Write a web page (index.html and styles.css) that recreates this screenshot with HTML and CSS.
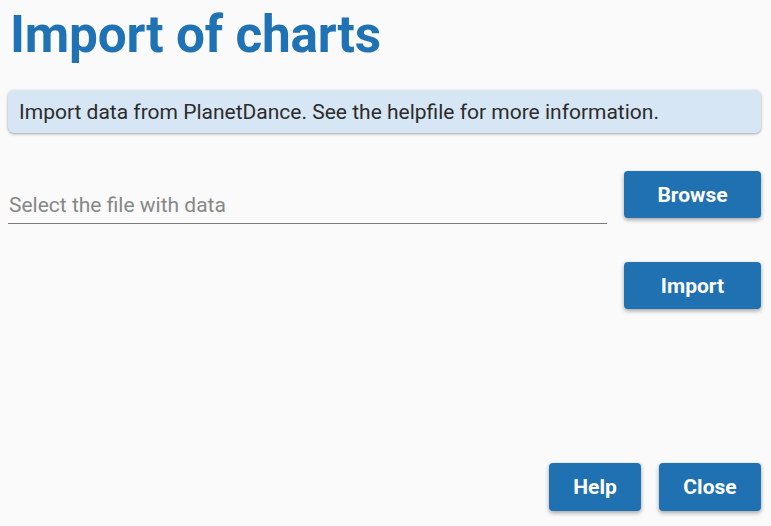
FILE: index.html
```html
<!DOCTYPE html>
<html lang="en">
<head>
<meta charset="utf-8">
<title>Import of charts</title>
<link rel="stylesheet" href="styles.css">
</head>
<body>
<div class="page">
  <h1 class="title">Import of charts</h1>
  <div class="info">Import data from PlanetDance. See the helpfile for more information.</div>
  <div class="file-row">
    <div class="field"><span class="placeholder">Select the file with data</span></div>
    <button class="btn btn-wide">Browse</button>
  </div>
  <div class="import-row">
    <button class="btn btn-wide">Import</button>
  </div>
  <div class="spacer"></div>
  <div class="footer">
    <button class="btn btn-help">Help</button>
    <button class="btn btn-close">Close</button>
  </div>
</div>
</body>
</html>
```

FILE: styles.css
```css
html, body {
  margin: 0;
  padding: 0;
  background: #fafafa;
  height: 100%;
}
body {
  font-family: Roboto, "Liberation Sans", sans-serif;
}
.page {
  box-sizing: border-box;
  height: 526px;
  padding: 0 10px 15px 8px;
  display: flex;
  flex-direction: column;
}
.title {
  margin: 0;
  padding: 4px 0 0 2px;
  font-size: 51.3px;
  font-weight: 700;
  line-height: 62px;
  color: #1f72b4;
  letter-spacing: -0.2px;
}
.info {
  margin-top: 24px;
  height: 43px;
  box-sizing: border-box;
  background: #d6e6f4;
  border-radius: 6px;
  box-shadow: 0 1px 3px rgba(0,0,0,0.35);
  padding: 0 11px;
  display: flex;
  align-items: center;
  font-size: 21px;
  color: #2c2c2c;
}
.file-row {
  margin-top: 38px;
  display: flex;
  align-items: flex-start;
  justify-content: space-between;
}
.field {
  width: 599px;
  margin-top: 21px;
  height: 32px;
  border-bottom: 1.5px solid #7a7a7a;
  display: flex;
  align-items: flex-end;
  padding-left: 1px;
  box-sizing: border-box;
}
.placeholder {
  font-size: 21px;
  color: #888;
  padding-bottom: 6px;
}
.btn {
  border: none;
  border-radius: 4px;
  background: #1f71b2;
  color: #fff;
  font-family: Roboto, "Liberation Sans", sans-serif;
  font-size: 21px;
  font-weight: 700;
  height: 47px;
  box-shadow: 0 2px 4px rgba(0,0,0,0.35);
  padding: 0;
  margin: 0;
}
.btn-wide {
  width: 137px;
}
.import-row {
  margin-top: 38px;
  display: flex;
  justify-content: flex-end;
}
.spacer {
  flex: 1;
}
.footer {
  display: flex;
  justify-content: flex-end;
  gap: 18px;
}
.btn-help {
  width: 92px;
  height: 48px;
}
.btn-close {
  width: 102px;
  height: 48px;
}
```
